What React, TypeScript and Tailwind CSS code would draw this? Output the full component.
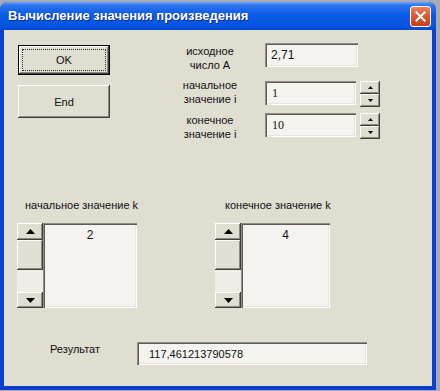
// Windows XP style VBA UserForm — "Вычисление значения произведения"

const raised =
  "shadow-[inset_-1px_-1px_#404040,inset_1px_1px_#ffffff,inset_-2px_-2px_#8d8a80]";
const sunken =
  "shadow-[inset_1px_1px_#8e8c86,inset_2px_2px_#5e5c57,inset_-1px_-1px_#ffffff,inset_-2px_-2px_#e6e4dc]";

function Tri({ dir, w, h }: { dir: "up" | "down"; w: number; h: number }) {
  const pts = dir === "up" ? `0,${h} ${w},${h} ${w / 2},0` : `0,0 ${w},0 ${w / 2},${h}`;
  return (
    <svg width={w} height={h} viewBox={`0 0 ${w} ${h}`} className="block">
      <polygon points={pts} fill="#000" />
    </svg>
  );
}

function Spin() {
  return (
    <div className="ml-[4px] flex h-[26px] w-[20px] flex-col">
      <div className={`flex h-[13px] items-center justify-center bg-[#e0ddd1] ${raised}`}>
        <Tri dir="up" w={5} h={3} />
      </div>
      <div className={`flex h-[13px] items-center justify-center bg-[#e0ddd1] ${raised}`}>
        <Tri dir="down" w={5} h={3} />
      </div>
    </div>
  );
}

function ListWithScroll({ label, value, labelPad }: { label: string; value: string; labelPad: string }) {
  return (
    <div className="flex flex-col">
      <span className={`h-[14px] whitespace-nowrap ${labelPad}`}>{label}</span>
      <div className="mt-[11px] flex h-[85px]">
        <div className="flex w-[26px] flex-col bg-[#eeede6]">
          <div className={`flex h-[17px] items-center justify-center bg-[#e0ddd1] ${raised}`}>
            <Tri dir="up" w={9} h={5} />
          </div>
          <div className={`h-[30px] bg-[#e2dfd4] ${raised}`} />
          <div className="flex-1" />
          <div className={`flex h-[16px] items-center justify-center bg-[#e0ddd1] ${raised}`}>
            <Tri dir="down" w={9} h={5} />
          </div>
        </div>
        <div className={`flex-1 bg-[#f4f3ef] pt-[5px] text-center text-[12px] ${sunken}`}>{value}</div>
      </div>
    </div>
  );
}

export default function App() {
  return (
    <div className="flex h-[391px] w-[440px] flex-col bg-[#aaaab4] font-['Liberation_Sans',Arial,sans-serif]">
      <div className="mt-[2px] flex h-[388px] w-[436px] flex-col overflow-hidden rounded-t-[8px] bg-[#0b3fcf]">
        {/* Title bar */}
        <div className="flex h-[28px] shrink-0 items-center justify-between bg-[linear-gradient(180deg,#6aa6f7_0%,#2b74ee_12%,#0c5be6_45%,#0655e0_85%,#0448cd_100%)] pl-[8px] pr-[5px]">
          <span className="text-[13px] font-bold text-white [text-shadow:1px_1px_#0a2a8a]">
            Вычисление значения произведения
          </span>
          <div className="flex h-[21px] w-[21px] items-center justify-center rounded-[3px] border border-white bg-[linear-gradient(180deg,#e8825e,#d4522b_60%,#c2401c)]">
            <svg width="11" height="11" viewBox="0 0 11 11">
              <path d="M1.5 1.5 L9.5 9.5 M9.5 1.5 L1.5 9.5" stroke="#fff" strokeWidth="2" strokeLinecap="square" />
            </svg>
          </div>
        </div>

        {/* Client area */}
        <div className="mx-[4px] mb-[4px] flex flex-1 flex-col bg-[#e0ddd1] text-[11px] leading-[14px] text-[#111]">
          {/* Top section */}
          <div className="flex pt-[13px]">
            <div className="ml-[14px] mt-[2px] flex w-[92px] flex-col gap-[10px]">
              <div className="h-[30px] border border-black bg-[#e0ddd1]">
                <div className={`flex h-full items-center justify-center p-[3px] ${raised}`}>
                  <div className="flex h-full w-full items-center justify-center border border-dotted border-[#333]">
                    OK
                  </div>
                </div>
              </div>
              <div className={`flex h-[33px] items-center justify-center bg-[#e0ddd1] ${raised}`}>End</div>
            </div>

            <div className="ml-[55px] flex flex-col">
              <div className="flex h-[24px] items-center">
                <span className="w-[90px] pt-[5px] text-center">исходное<br />число А</span>
                <div className={`ml-[10px] flex h-[24px] w-[93px] items-center bg-[#f4f3ef] pl-[6px] text-[12px] ${sunken}`}>
                  2,71
                </div>
              </div>
              <div className="mt-[14px] flex h-[26px] items-start">
                <span className="w-[90px] self-center pb-[5px] text-center">начальное<br />значение i</span>
                <div className={`ml-[10px] flex h-[24px] w-[91px] items-center bg-[#f4f3ef] pl-[7px] font-['Liberation_Serif',serif] text-[12px] ${sunken}`}>
                  1
                </div>
                <Spin />
              </div>
              <div className="mt-[6px] flex h-[26px] items-start">
                <span className="w-[90px] self-center pt-[2px] text-center">конечное<br />значение i</span>
                <div className={`ml-[10px] flex h-[24px] w-[91px] items-center bg-[#f4f3ef] pl-[7px] font-['Liberation_Serif',serif] text-[12px] ${sunken}`}>
                  10
                </div>
                <Spin />
              </div>
            </div>
          </div>

          {/* Middle section */}
          <div className="mt-[59px] flex">
            <div className="ml-[13px] w-[120px]">
              <ListWithScroll label="начальное значение k" value="2" labelPad="pl-[8px]" />
            </div>
            <div className="ml-[78px] w-[115px]">
              <ListWithScroll label="конечное значение k" value="4" labelPad="pl-[10px]" />
            </div>
          </div>

          {/* Result */}
          <div className="mt-[34px] flex items-start">
            <span className="ml-[46px] w-[87px]">Результат</span>
            <div className={`flex h-[23px] w-[230px] items-center bg-[#f4f3ef] pl-[12px] ${sunken}`}>
              117,461213790578
            </div>
          </div>
        </div>
      </div>
    </div>
  );
}
